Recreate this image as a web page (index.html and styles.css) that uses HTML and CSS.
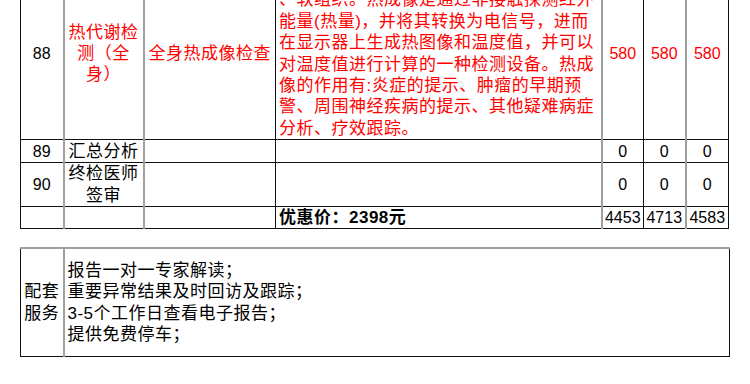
FILE: index.html
```html
<!DOCTYPE html>
<html lang="zh-CN">
<head>
<meta charset="utf-8">
<title>体检套餐</title>
<link rel="stylesheet" href="styles.css">
</head>
<body>
<div class="page">
  <table class="sheet items">
    <colgroup>
      <col class="c-no"><col class="c-name"><col class="c-item"><col class="c-desc"><col class="c-p"><col class="c-p"><col class="c-p3">
    </colgroup>
    <tr class="r-big">
      <td class="num">88</td>
      <td class="g center red">热代谢检<br>测（全<br>身）</td>
      <td class="g center red">全身热成像检查</td>
      <td class="left red desc">全身热成像可检测人体骨骼、关节、肌肉<br>、软组织。热成像是通过非接触探测红外<br>能量(热量)，并将其转换为电信号，进而<br>在显示器上生成热图像和温度值，并可以<br>对温度值进行计算的一种检测设备。热成<br>像的作用有:炎症的提示、肿瘤的早期预<br>警、周围神经疾病的提示、其他疑难病症<br>分析、疗效跟踪。</td>
      <td class="g num red">580</td>
      <td class="num red">580</td>
      <td class="g num red">580</td>
    </tr>
    <tr class="r-s">
      <td class="num">89</td>
      <td class="g center">汇总分析</td>
      <td class="g"></td>
      <td></td>
      <td class="g num">0</td>
      <td class="num">0</td>
      <td class="g num">0</td>
    </tr>
    <tr class="r-m">
      <td class="num">90</td>
      <td class="g center">终检医师<br>签审</td>
      <td class="g"></td>
      <td></td>
      <td class="g num">0</td>
      <td class="num">0</td>
      <td class="g num">0</td>
    </tr>
    <tr class="r-t">
      <td></td>
      <td class="g"></td>
      <td class="g"></td>
      <td class="left total">优惠价：2398元</td>
      <td class="g num">4453</td>
      <td class="num">4713</td>
      <td class="g num">4583</td>
    </tr>
  </table>

  <table class="sheet service">
    <colgroup><col class="c-no"><col class="c-rest"></colgroup>
    <tr class="r-svc">
      <td class="center">配套<br>服务</td>
      <td class="g left">报告一对一专家解读；<br>重要异常结果及时回访及跟踪；<br>3-5个工作日查看电子报告；<br>提供免费停车；</td>
    </tr>
  </table>
</div>
</body>
</html>
```

FILE: styles.css
```css
html, body {
  margin: 0;
  padding: 0;
  background: #ffffff;
}

body {
  font-family: "Liberation Sans", "Noto Sans CJK SC", sans-serif;
  font-size: 17px;
  color: #000000;
  overflow: hidden;
}

.page {
  padding-left: 20px;
  margin-top: -33px;
  display: flex;
  flex-direction: column;
  gap: 18px;
}

.sheet {
  border-collapse: collapse;
  table-layout: fixed;
}

.sheet.items { width: 708px; }
.sheet.service { width: 709px; }

.sheet td {
  border: 1px solid #111111;
  padding: 0 3px;
  line-height: 21.4px;
  letter-spacing: 0.5px;
  vertical-align: middle;
  white-space: nowrap;
  overflow: hidden;
}

.sheet td.g {
  border-left: 2px solid #a0a0a0;
}

.c-no { width: 43px; }
.c-name { width: 80px; }
.c-item { width: 132px; }
.c-desc { width: 326px; }
.c-p { width: 42px; }
.c-p3 { width: 43px; }
.c-rest { width: 666px; }

.center { text-align: center; }
.left { text-align: left; }

.num {
  text-align: center;
  font-size: 16px;
  letter-spacing: 0;
}

.sheet td.num { padding: 0; letter-spacing: 0; }

.red { color: #ff0000; }

.desc { padding-left: 4px; }

.total { font-weight: bold; }

.r-big { height: 170px; }
.r-s { height: 23px; }
.r-m { height: 43px; }
.r-t { height: 22px; }

.sheet.service tr.r-svc { height: 108px; }
.sheet.service tr.r-svc td { border-top: 2px solid #a0a0a0; }
.sheet.service tr.r-svc td:last-child { border-right: 1px solid #111111; }
```
